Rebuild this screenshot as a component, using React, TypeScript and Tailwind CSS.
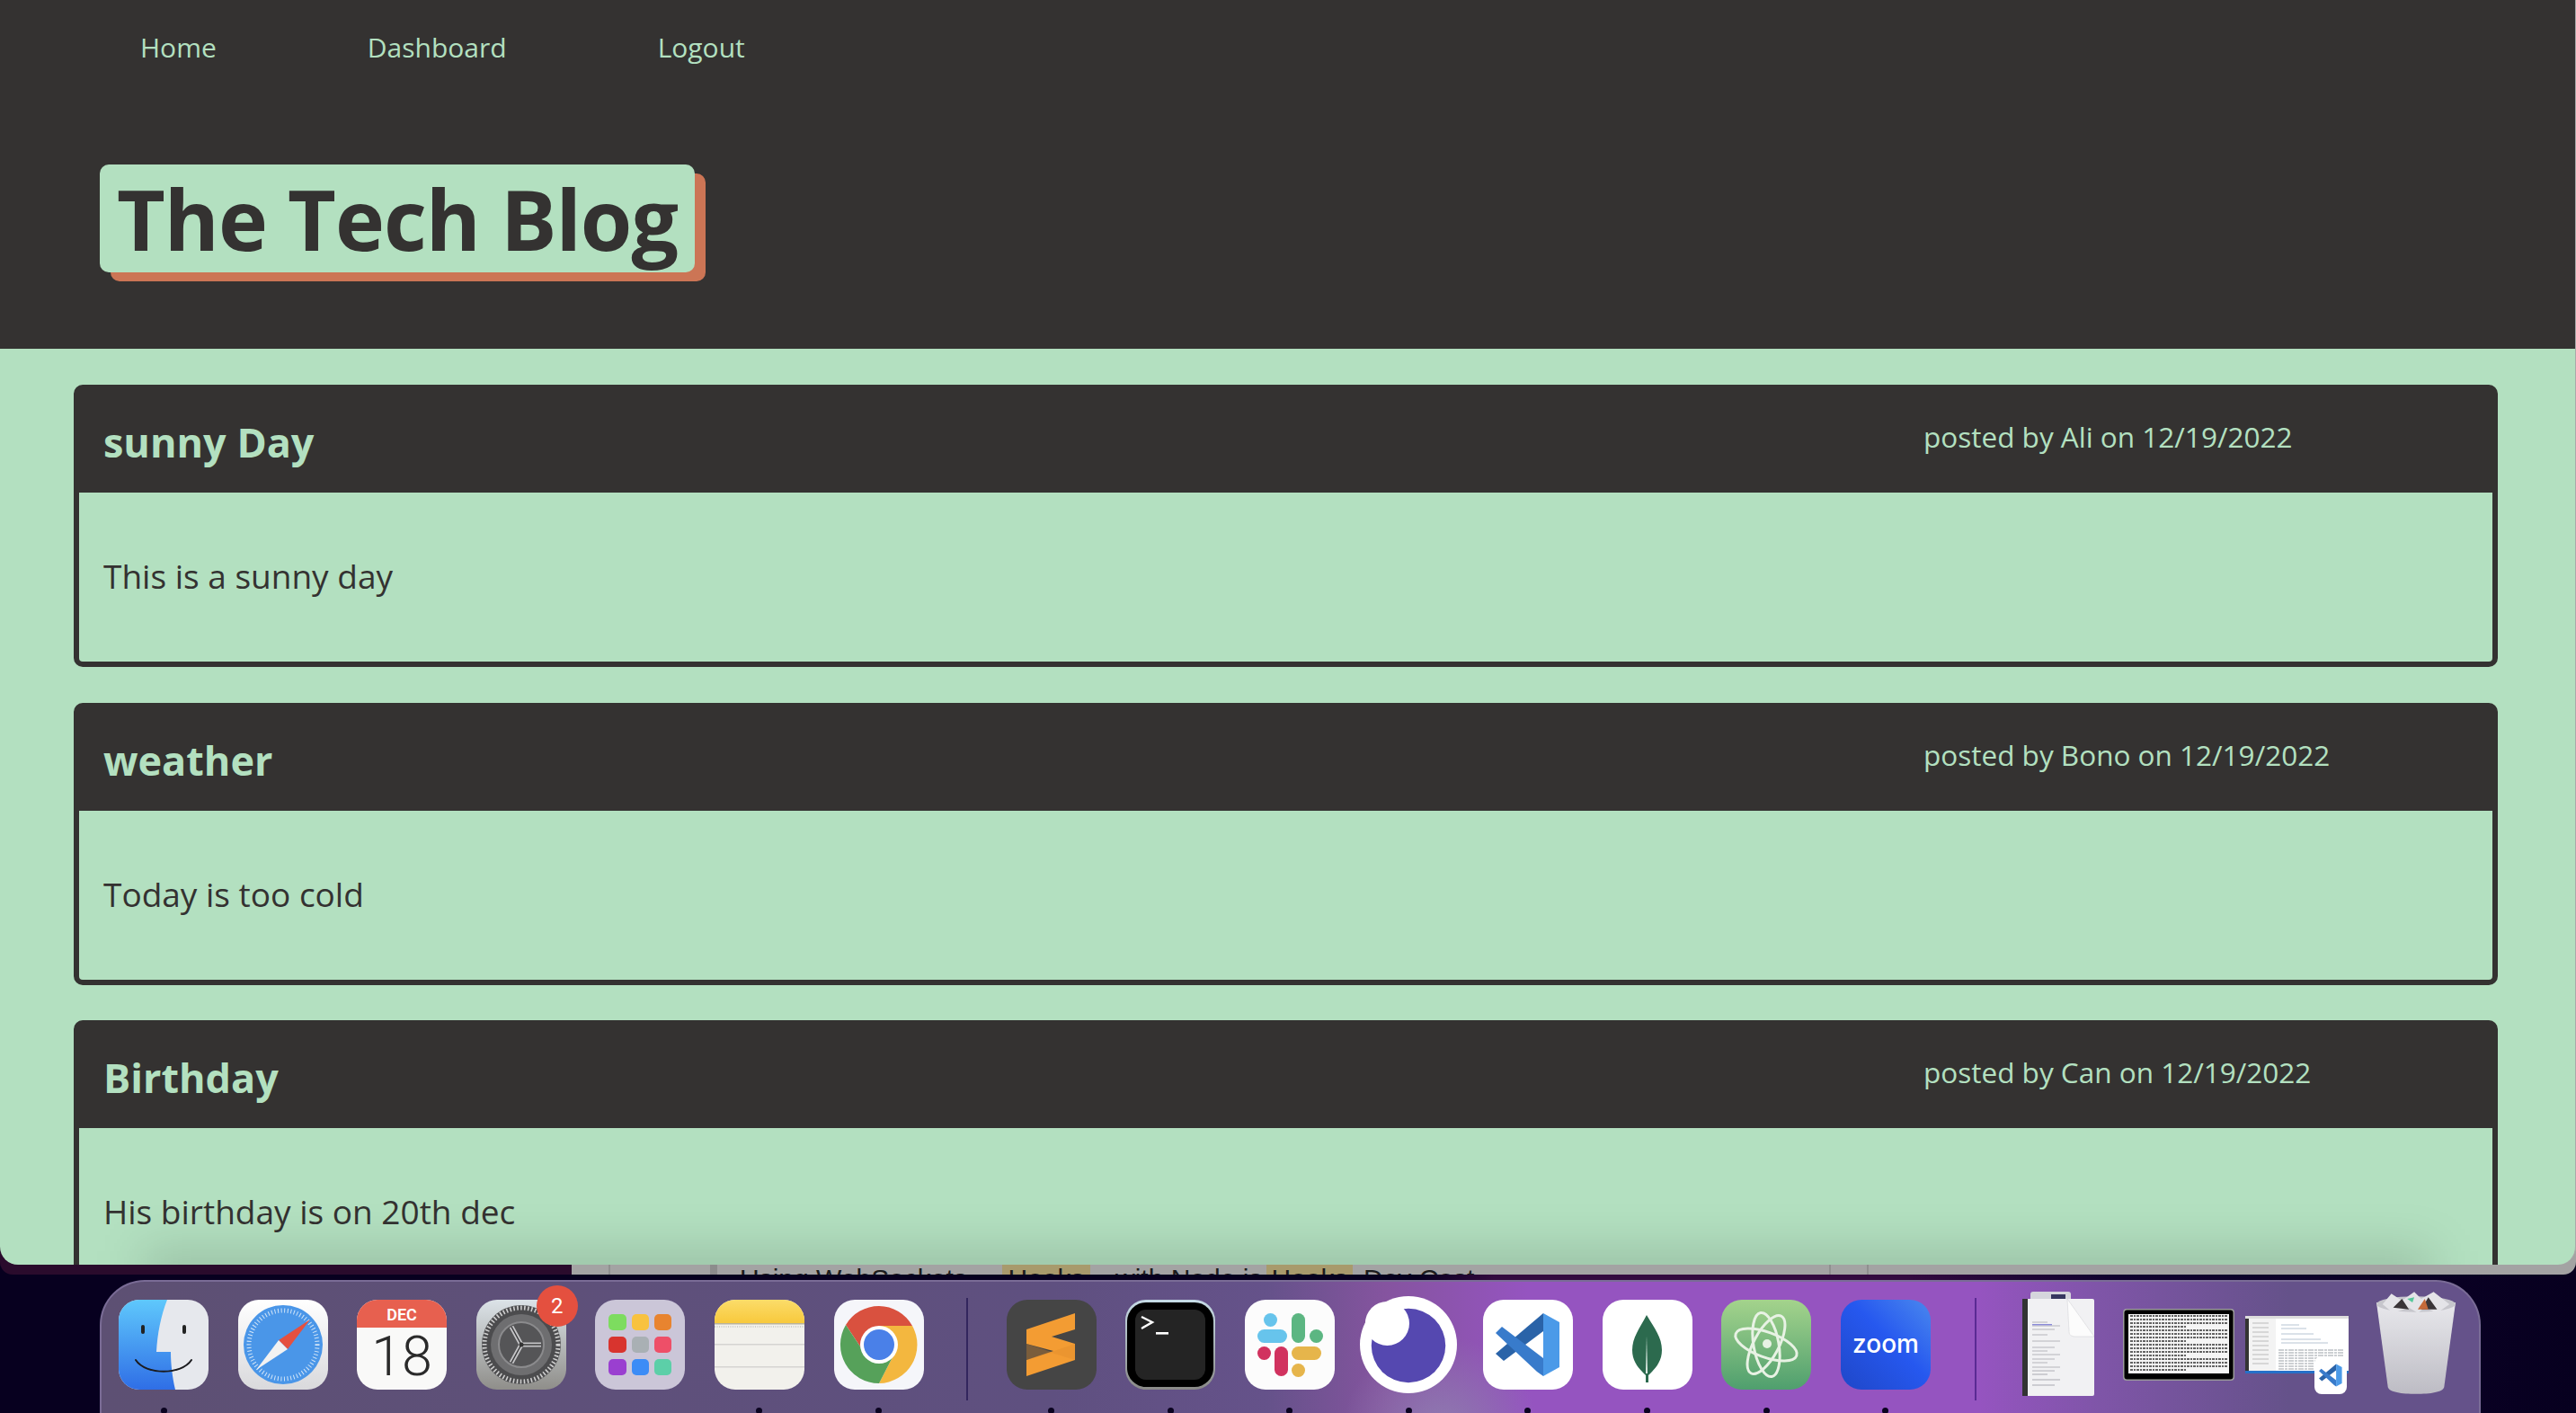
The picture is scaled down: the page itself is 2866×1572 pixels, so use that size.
import React from 'react';

const posts = [
  { title: 'sunny Day', meta: 'posted by Ali on 12/19/2022', body: 'This is a sunny day' },
  { title: 'weather', meta: 'posted by Bono on 12/19/2022', body: 'Today is too cold' },
  { title: 'Birthday', meta: 'posted by Can on 12/19/2022', body: 'His birthday is on 20th dec' },
];

const font = { fontFamily: '"Open Sans", sans-serif' };

const Finder = () => (
  <svg viewBox="0 0 100 100" className="w-full h-full">
    <defs>
      <linearGradient id="fb" x1="0" y1="0" x2="0" y2="1">
        <stop offset="0" stopColor="#5fc8fc" />
        <stop offset="1" stopColor="#2f6ee6" />
      </linearGradient>
      <clipPath id="fc"><rect width="100" height="100" rx="23" /></clipPath>
    </defs>
    <g clipPath="url(#fc)">
      <rect width="100" height="100" fill="#e6e8ed" />
      <path d="M0 0H54C47 18 43 38 42 58H58C58 72 60 88 63 100H0Z" fill="url(#fb)" />
    </g>
    <rect x="25" y="28" width="4" height="10" rx="2" fill="#222" />
    <rect x="71" y="28" width="4" height="10" rx="2" fill="#222" />
    <path d="M19 67C30 84 70 84 81 67" fill="none" stroke="#1b1b1f" strokeWidth="2" strokeLinecap="round" />
  </svg>
);

const Safari = () => (
  <svg viewBox="0 0 100 100" className="w-full h-full">
    <defs>
      <linearGradient id="sb" x1="0" y1="0" x2="0" y2="1">
        <stop offset="0" stopColor="#ffffff" />
        <stop offset="1" stopColor="#d9d9dc" />
      </linearGradient>
    </defs>
    <rect width="100" height="100" rx="23" fill="url(#sb)" />
    <circle cx="50" cy="50" r="44" fill="#4a96e8" />
    <circle cx="50" cy="50" r="38" fill="none" stroke="#d4e6f8" strokeWidth="5" strokeDasharray="1 2.6" />
    <polygon points="80,22 55,55 45,45" fill="#e5503f" />
    <polygon points="20,78 45,45 55,55" fill="#f2f2f2" />
  </svg>
);

const Calendar = () => (
  <svg viewBox="0 0 100 100" className="w-full h-full">
    <defs><clipPath id="cc"><rect width="100" height="100" rx="23" /></clipPath></defs>
    <g clipPath="url(#cc)">
      <rect width="100" height="100" fill="#f9f9f8" />
      <rect width="100" height="31" fill="#e7604f" />
    </g>
    <text x="50" y="23" textAnchor="middle" fontSize="18" fontWeight="600" fill="#fff" fontFamily="Roboto, sans-serif">DEC</text>
    <text x="50" y="84" textAnchor="middle" fontSize="61" fontWeight="300" fill="#2a2a2a" fontFamily="Roboto, sans-serif">18</text>
  </svg>
);

const Settings = () => (
  <svg viewBox="0 0 100 100" className="w-full h-full">
    <defs>
      <linearGradient id="gb" x1="0" y1="0" x2="0" y2="1">
        <stop offset="0" stopColor="#dce3e8" />
        <stop offset="1" stopColor="#8f8e8a" />
      </linearGradient>
    </defs>
    <rect width="100" height="100" rx="23" fill="url(#gb)" />
    <circle cx="50" cy="50" r="44" fill="#4c4c4e" />
    <circle cx="50" cy="50" r="41" fill="none" stroke="#d0d0d0" strokeWidth="5" strokeDasharray="1.6 2.4" />
    <circle cx="50" cy="50" r="34" fill="#6e6e70" />
    <circle cx="50" cy="50" r="25" fill="#555557" stroke="#8b8b8d" strokeWidth="2" />
    <path d="M50 50L72 50M50 50L39 70M50 50L39 30" stroke="#c4c4c6" strokeWidth="5" />
    <path d="M50 50L72 50M50 50L39 70M50 50L39 30" stroke="#3b3b3d" strokeWidth="1.5" />
    <circle cx="50" cy="50" r="2.5" fill="#333" />
  </svg>
);

const launchColors = ['#7ddc5f', '#f8c23f', '#e8842f', '#d8342e', '#a9b0b4', '#ee4f68', '#9a3fd0', '#3c8cf6', '#5ccfa8'];

const Launchpad = () => (
  <div className="w-full h-full rounded-[23px] bg-[#cbc6d8] grid grid-cols-3 gap-x-[6px] gap-y-[7px] px-[15px] py-[16px]">
    {launchColors.map((c) => (
      <div key={c} className="rounded-[5px]" style={{ background: c }} />
    ))}
  </div>
);

const Notes = () => (
  <svg viewBox="0 0 100 100" className="w-full h-full">
    <defs>
      <clipPath id="nc"><rect width="100" height="100" rx="23" /></clipPath>
      <linearGradient id="ny" x1="0" y1="0" x2="0" y2="1">
        <stop offset="0" stopColor="#fbdc6a" />
        <stop offset="1" stopColor="#f8c93c" />
      </linearGradient>
    </defs>
    <g clipPath="url(#nc)">
      <rect width="100" height="100" fill="#f2f1ec" />
      <rect width="100" height="26" fill="url(#ny)" />
      <rect y="26" width="100" height="1.5" fill="#b9b39c" />
      <line x1="0" y1="30" x2="100" y2="30" stroke="#c4c4c0" strokeWidth="1.5" strokeDasharray="1 1.5" />
      <rect y="49" width="100" height="1.5" fill="#d5d4d1" />
      <rect y="74" width="100" height="1.5" fill="#d5d4d1" />
    </g>
  </svg>
);

const Chrome = () => (
  <svg viewBox="0 0 100 100" className="w-full h-full">
    <rect width="100" height="100" rx="23" fill="#f5f6fa" />
    <path d="M50 7A43 43 0 0 1 87 29L50 29 33 58 13 28A43 43 0 0 1 50 7Z" fill="#d9513f" />
    <path d="M87 29A43 43 0 0 1 50 93L67 60 50 29Z" fill="#f3b73f" />
    <path d="M13 28A43 43 0 0 0 50 93L67 60 33 58Z" fill="#56a15a" />
    <circle cx="50" cy="50" r="21" fill="#fff" />
    <circle cx="50" cy="50" r="17" fill="#4a80e8" />
  </svg>
);

const Sublime = () => (
  <svg viewBox="0 0 100 100" className="w-full h-full">
    <rect width="100" height="100" rx="23" fill="#454545" />
    <polygon points="76,15 76,33 50,41 76,49 76,67 22,85 22,67 52,57 22,49 22,33" fill="#f39c33" />
    <polygon points="22,49 50,58 76,49 76,67 50,59 22,67" fill="#dd8a2b" opacity="0.35" />
  </svg>
);

const Terminal = () => (
  <svg viewBox="0 0 100 100" className="w-full h-full">
    <defs>
      <linearGradient id="tb" x1="0" y1="0" x2="0" y2="1">
        <stop offset="0" stopColor="#c6dbe6" />
        <stop offset="1" stopColor="#8a8a88" />
      </linearGradient>
    </defs>
    <rect width="100" height="100" rx="23" fill="url(#tb)" />
    <rect x="2" y="3" width="96" height="94" rx="21" fill="#000" />
    <rect x="11" y="11" width="78" height="78" rx="12" fill="#242424" />
    <path d="M18 19L30 25L18 32" fill="none" stroke="#fff" strokeWidth="2.4" />
    <rect x="34" y="36" width="14" height="2.6" fill="#fff" />
  </svg>
);

const Slack = () => (
  <svg viewBox="0 0 100 100" className="w-full h-full">
    <rect width="100" height="100" rx="23" fill="#fcfcfc" />
    <rect x="21" y="15" width="15" height="15" rx="7.5" fill="#67c4ec" />
    <rect x="14" y="33" width="33" height="15" rx="7.5" fill="#67c4ec" />
    <rect x="52" y="15" width="15" height="33" rx="7.5" fill="#5cb682" />
    <rect x="72" y="33" width="15" height="15" rx="7.5" fill="#5cb682" />
    <rect x="14" y="52" width="15" height="15" rx="7.5" fill="#d1325f" />
    <rect x="33" y="52" width="15" height="33" rx="7.5" fill="#d1325f" />
    <rect x="52" y="52" width="33" height="15" rx="7.5" fill="#e6b54b" />
    <rect x="52" y="71" width="15" height="15" rx="7.5" fill="#e6b54b" />
  </svg>
);

const Eclipse = () => (
  <svg viewBox="0 0 110 110" className="w-full h-full">
    <circle cx="55" cy="55" r="55" fill="#fff" />
    <circle cx="55" cy="56" r="42" fill="#5548b0" />
    <circle cx="31" cy="31" r="25" fill="#fff" />
  </svg>
);

const VsCodeMark = () => (
  <g>
    <path d="M67 15V35L23 68 14 60Z" fill="#2a63a8" />
    <path d="M14 37L21 30 67 65V85L60 80Z" fill="#387bcb" />
    <path d="M67 15L85 25V75L67 85Z" fill="#4b9ae8" />
  </g>
);

const VsCode = () => (
  <svg viewBox="0 0 100 100" className="w-full h-full">
    <rect width="100" height="100" rx="23" fill="#fff" />
    <VsCodeMark />
  </svg>
);

const Mongo = () => (
  <svg viewBox="0 0 100 100" className="w-full h-full">
    <rect width="100" height="100" rx="23" fill="#fff" />
    <path d="M49 17C58 32 66 42 66 56C66 70 57 78 51 84V92H48V84C42 78 33 70 33 56C33 42 41 32 49 17Z" fill="#2c6a4e" />
    <path d="M49 40L50 82H48Z" fill="#e8f2ec" />
  </svg>
);

const Atom = () => (
  <svg viewBox="0 0 100 100" className="w-full h-full">
    <defs>
      <linearGradient id="ab" x1="0" y1="0" x2="0" y2="1">
        <stop offset="0" stopColor="#a4d38c" />
        <stop offset="1" stopColor="#4f9f6e" />
      </linearGradient>
    </defs>
    <rect width="100" height="100" rx="23" fill="url(#ab)" />
    <g fill="none" stroke="#e8f2e4" strokeWidth="3">
      <ellipse cx="50" cy="50" rx="36" ry="14" transform="rotate(20 50 50)" />
      <ellipse cx="50" cy="50" rx="36" ry="14" transform="rotate(80 50 50)" />
      <ellipse cx="50" cy="50" rx="36" ry="14" transform="rotate(-62 50 50)" />
    </g>
    <circle cx="51" cy="49" r="5" fill="#e8f2e4" />
  </svg>
);

const ZoomApp = () => (
  <svg viewBox="0 0 100 100" className="w-full h-full">
    <defs>
      <linearGradient id="zb" x1="1" y1="0" x2="0" y2="1">
        <stop offset="0" stopColor="#4a88ee" />
        <stop offset="0.45" stopColor="#2658ef" />
        <stop offset="1" stopColor="#1f47c8" />
      </linearGradient>
    </defs>
    <rect width="100" height="100" rx="23" fill="url(#zb)" />
    <text x="50" y="59" textAnchor="middle" fontSize="28" fontWeight="500" fill="#fff" fontFamily="Inter, sans-serif">zoom</text>
  </svg>
);

const Doc = () => (
  <svg viewBox="0 0 80 116" className="w-full h-full">
    <rect x="9" y="0" width="45" height="22" rx="3" fill="#d5d5dc" />
    <rect x="32" y="3" width="16" height="5" fill="#37375f" />
    <rect x="0" y="8" width="80" height="108" rx="2" fill="#f1f1f3" />
    <rect x="0" y="8" width="6" height="108" fill="#333" />
    <path d="M50 8L80 50H60C54 50 52 48 52 44Z" fill="#fcfcfc" stroke="#cfcfd2" strokeWidth="0.5" />
    <g stroke="#b5b5bc" strokeWidth="1.2">
      {[34, 38, 42, 48, 55, 62, 66, 70, 75, 79, 84, 88, 92, 98, 104].map((y, i) => (
        <line key={y} x1="11" x2={i % 3 === 0 ? 28 : i % 3 === 1 ? 42 : 36} y1={y} y2={y} />
      ))}
    </g>
    <rect x="11" y="36" width="22" height="1.4" fill="#8a8ad8" />
  </svg>
);

const termLines = [8, 12, 16, 20, 24, 28, 32, 36, 40, 44, 48, 52, 56, 60, 64, 68];

const TermShot = () => (
  <svg viewBox="0 0 124 80" className="w-full h-full">
    <rect width="124" height="80" rx="4" fill="#9a9a9a" />
    <rect x="1.5" y="1.5" width="121" height="77" rx="3" fill="#000" />
    <rect x="6" y="6" width="112" height="66" fill="#f5f5f5" />
    <g stroke="#333" strokeWidth="1.4" strokeDasharray="3 1 2 1">
      {termLines.map((y, i) => (
        <line key={y} x1="8" x2={i % 4 === 3 ? 70 : 116} y1={y} y2={y} />
      ))}
    </g>
  </svg>
);

const CodeShot = () => (
  <div className="relative w-full h-full">
    <svg viewBox="0 0 115 64" className="w-full h-full">
      <rect width="115" height="64" fill="#fff" />
      <rect width="4" height="64" fill="#333" />
      <rect x="4" width="30" height="64" fill="#f3f3f3" />
      <rect y="61" width="115" height="3" fill="#2670c8" />
      <rect width="115" height="3" fill="#ddd" />
      <g stroke="#9aa0a6" strokeWidth="1">
        {[38, 41, 44, 47, 50, 53, 56, 59].map((y) => (
          <line key={y} x1="37" x2="110" y1={y} y2={y} strokeDasharray="6 1 3 1" />
        ))}
      </g>
      <g stroke="#b6c4d2" strokeWidth="1">
        {[10, 14, 20, 26, 30].map((y, i) => (
          <line key={y} x1="40" x2={60 + i * 8} y1={y} y2={y} />
        ))}
      </g>
      <g stroke="#bbb" strokeWidth="1">
        {[8, 13, 18, 23, 28, 33, 38, 43, 48, 53].map((y) => (
          <line key={y} x1="8" x2="26" y1={y} y2={y} />
        ))}
      </g>
    </svg>
    <div className="absolute right-[2px] -bottom-[23px] w-[36px] h-[42px] rounded-[8px] bg-white">
      <svg viewBox="0 0 100 100" className="w-full h-full"><VsCodeMark /></svg>
    </div>
  </div>
);

const Trash = () => (
  <svg viewBox="0 0 92 116" className="w-full h-full">
    <defs>
      <linearGradient id="tr" x1="0" y1="0" x2="0" y2="1">
        <stop offset="0" stopColor="#e8e8ec" />
        <stop offset="1" stopColor="#bdbcc4" />
      </linearGradient>
    </defs>
    <path d="M1 12L14 108C15 114 30 116 46 116C62 116 77 114 78 108L91 12Z" fill="url(#tr)" />
    <ellipse cx="46" cy="14" rx="45" ry="9" fill="#c6c6cc" />
    <path d="M8 14L18 2 30 10 44 0 52 8 66 0 84 14 70 24 56 18 48 24 38 18 20 24Z" fill="#e4e4e8" />
    <path d="M20 18L30 8 38 20ZM52 20L60 6 70 20Z" fill="#3a3538" />
    <path d="M36 8L44 6 42 12Z" fill="#55c89a" />
    <path d="M48 20L56 8 60 20Z" fill="#c56a3a" />
  </svg>
);

const DockItem = ({ running = false, children }: { running?: boolean; children: React.ReactNode }) => (
  <div className="flex flex-col items-center shrink-0 w-[100px]">
    <div className="h-[100px] w-full flex items-center justify-center relative">{children}</div>
    {running && <div className="mt-[20px] w-[7px] h-[7px] rounded-full bg-[#0b0320]" />}
  </div>
);

const Divider = ({ className }: { className: string }) => (
  <div className={`w-[2px] h-[114px] -mt-[2px] shrink-0 ${className}`} />
);

export default function App() {
  return (
    <div className="w-[2866px] h-[1572px] overflow-hidden flex flex-col bg-[linear-gradient(90deg,#07001f_55%,#33093f_58%,#33093f_74%,#10022f_82%,#07001f)]" style={font}>
      <div className="relative z-10 h-[1407px] shrink-0 overflow-hidden rounded-b-[20px] bg-[#b3e0c0] border-r border-[#a9a9a9]">
        <header className="h-[388px] bg-[#343231]">
          <nav className="flex gap-[168px] pl-[156px] pt-[30px] text-[#b3e0c0] text-[30px] leading-[46px]">
            <a>Home</a>
            <a>Dashboard</a>
            <a>Logout</a>
          </nav>
          <div className="ml-[111px] mt-[107px] w-[662px] h-[120px] rounded-[10px] bg-[#b3e0c0] shadow-[12px_10px_0_#cc7555] flex items-center justify-center">
            <h1 className="text-[93px] leading-none font-bold text-[#343231] tracking-[-1px]">The Tech Blog</h1>
          </div>
        </header>
        <main className="pl-[82px] pr-[86px] pt-[40px] flex flex-col gap-[39.5px]">
          {posts.map((p) => (
            <article key={p.title} className="h-[314px] shrink-0 border-[6px] border-[#343231] rounded-[10px] flex flex-col">
              <div className="h-[114px] shrink-0 bg-[#343231] flex justify-between text-[#b3e0c0]">
                <h2 className="pl-[27px] pt-[28px] text-[45px] leading-[60px] font-bold">{p.title}</h2>
                <p className="w-[633px] pt-[29px] text-[31.5px] leading-[46px]">{p.meta}</p>
              </div>
              <p className="pl-[27px] pt-[68px] text-[37px] leading-[50px] text-[#343231]">{p.body}</p>
            </article>
          ))}
        </main>
        {/* dock shadow falling on the window */}
        <div className="absolute left-[160px] right-[160px] -bottom-[34px] h-[50px] bg-black/15 blur-[26px]" />
      </div>

      {/* window behind the browser, only its bottom edge shows */}
      <div className="-mt-[20px] h-[31px] flex overflow-hidden rounded-b-[14px] shrink-0">
        <div className="w-[636px] bg-[#2a0b2c] shrink-0" />
        <div className="relative flex-1 bg-[#a3a3a3] pt-[18px] pl-[187px] text-[30px] leading-[36px] whitespace-nowrap text-[#1c1c1c]" style={{ fontFamily: '"Liberation Sans", sans-serif' }}>
          <div className="absolute left-[41px] top-0 w-[2px] h-full bg-[#8f8f8f]" />
          <div className="absolute left-[154px] top-0 w-[8px] h-full bg-[#8c8c8c]" />
          <div className="absolute left-[1399px] top-0 w-[2px] h-full bg-[#8f8f8f]" />
          <div className="absolute left-[1441px] top-0 w-[2px] h-full bg-[#8f8f8f]" />
          <span className="inline-block w-[292px]">Using WebSockets</span>
          <span className="inline-block w-[98px] bg-[#a89a6c] text-center">Hooks</span>
          <span className="inline-block w-[196px] pl-[28px]">with Node.js</span>
          <span className="inline-block w-[96px] bg-[#a89a6c] text-center">Hooks</span>
          <span className="inline-block pl-[12px]">Dev Cost</span>
        </div>
      </div>

      <div className="mt-[6px] ml-[111px] w-[2649px] h-[170px] shrink-0 rounded-t-[50px] border-t-2 border-x-2 border-[#7a6c96] bg-[radial-gradient(circle_at_1490px_170px,#8f7db0_0%,transparent_110px),linear-gradient(90deg,#5d5073_0%,#5f5080_40%,#65528a_49%,#85549f_54%,#9554c0_60%,#9554c0_79%,#7f55a8_84%,#65528a_92%,#65528a_100%)] overflow-hidden">
        <div className="h-full pt-[20px] pl-[19px] flex items-start">
          <div className="flex gap-[32.6px]">
            <DockItem running><Finder /></DockItem>
            <DockItem><Safari /></DockItem>
            <DockItem><Calendar /></DockItem>
            <DockItem>
              <Settings />
              <div className="absolute -top-[16px] -right-[13px] w-[46px] h-[46px] rounded-full bg-[#e4503f] text-white text-[24px] flex items-center justify-center" style={{ fontFamily: 'Roboto, sans-serif' }}>2</div>
            </DockItem>
            <DockItem><Launchpad /></DockItem>
            <DockItem running><Notes /></DockItem>
            <DockItem running><Chrome /></DockItem>
          </div>
          <Divider className="ml-[47px] mr-[43px] bg-[#33265e]" />
          <div className="flex gap-[32.6px]">
            <DockItem running><Sublime /></DockItem>
            <DockItem running><Terminal /></DockItem>
            <DockItem running><Slack /></DockItem>
            <DockItem running><div className="w-[108px] h-[108px] shrink-0"><Eclipse /></div></DockItem>
            <DockItem running><VsCode /></DockItem>
            <DockItem running><Mongo /></DockItem>
            <DockItem running><Atom /></DockItem>
            <DockItem running><ZoomApp /></DockItem>
          </div>
          <Divider className="ml-[49px] mr-[51px] bg-[#5a2a94]" />
          <div className="flex items-start -mt-[9px]">
            <div className="w-[80px] h-[116px] shrink-0"><Doc /></div>
            <div className="w-[124px] h-[80px] ml-[32px] mt-[19px] shrink-0"><TermShot /></div>
            <div className="w-[115px] h-[64px] ml-[12px] mt-[27px] shrink-0"><CodeShot /></div>
            <div className="w-[90px] h-[114px] ml-[30px] shrink-0"><Trash /></div>
          </div>
        </div>
      </div>
    </div>
  );
}
